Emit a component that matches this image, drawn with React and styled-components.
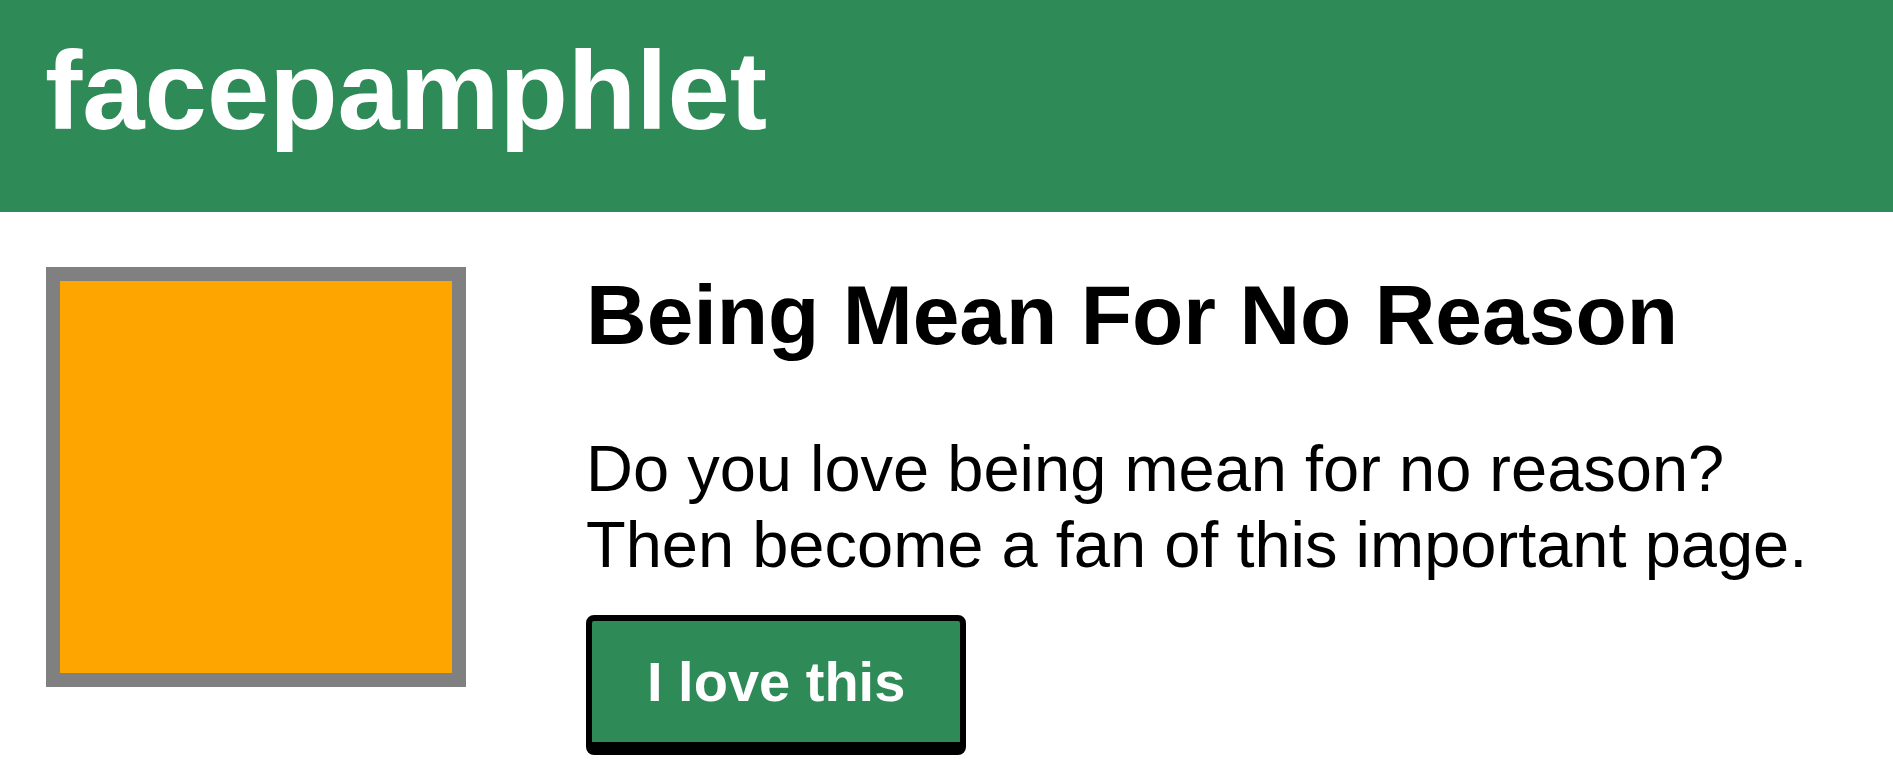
import React from "react";
import styled, { createGlobalStyle } from "styled-components";

const GlobalStyle = createGlobalStyle`
  html, body {
    margin: 0;
    padding: 0;
    background: #ffffff;
  }
  body {
    font-family: "Liberation Sans", Arial, Helvetica, sans-serif;
    color: #000000;
  }
`;

const Page = styled.div`
  display: flex;
  flex-direction: column;
  width: 100%;
  min-height: 784px;
`;

const Header = styled.header`
  display: flex;
  align-items: flex-start;
  height: 212px;
  box-sizing: border-box;
  padding: 26px 45px 0;
  background-color: #2e8b57;
`;

const Logo = styled.h1`
  margin: 0;
  font-size: 112px;
  font-weight: 700;
  line-height: normal;
  color: #ffffff;
`;

const Content = styled.main`
  display: flex;
  align-items: flex-start;
  gap: 120px;
  padding: 55px 46px;
`;

const Picture = styled.div`
  flex: none;
  width: 420px;
  height: 420px;
  box-sizing: border-box;
  border: 14px solid #808080;
  background-color: #ffa500;
`;

const Details = styled.section`
  display: flex;
  flex-direction: column;
  align-items: flex-start;
`;

const Title = styled.h2`
  margin: 0;
  font-size: 84px;
  font-weight: 700;
  line-height: normal;
`;

const Description = styled.p`
  margin: 67px 0 32px;
  font-size: 65px;
  line-height: 76px;
`;

const FanButton = styled.button`
  padding: 28px 55px;
  border: 6px solid #000000;
  border-bottom-width: 13px;
  border-radius: 8px;
  background-color: #2e8b57;
  color: #ffffff;
  font-family: "Liberation Sans", Arial, Helvetica, sans-serif;
  font-size: 56px;
  font-weight: 700;
  line-height: normal;
  cursor: pointer;
`;

export default function App() {
  return (
    <Page>
      <GlobalStyle />
      <Header>
        <Logo>facepamphlet</Logo>
      </Header>
      <Content>
        <Picture />
        <Details>
          <Title>Being Mean For No Reason</Title>
          <Description>
            Do you love being mean for no reason?
            <br />
            Then become a fan of this important page.
          </Description>
          <FanButton>I love this</FanButton>
        </Details>
      </Content>
    </Page>
  );
}
